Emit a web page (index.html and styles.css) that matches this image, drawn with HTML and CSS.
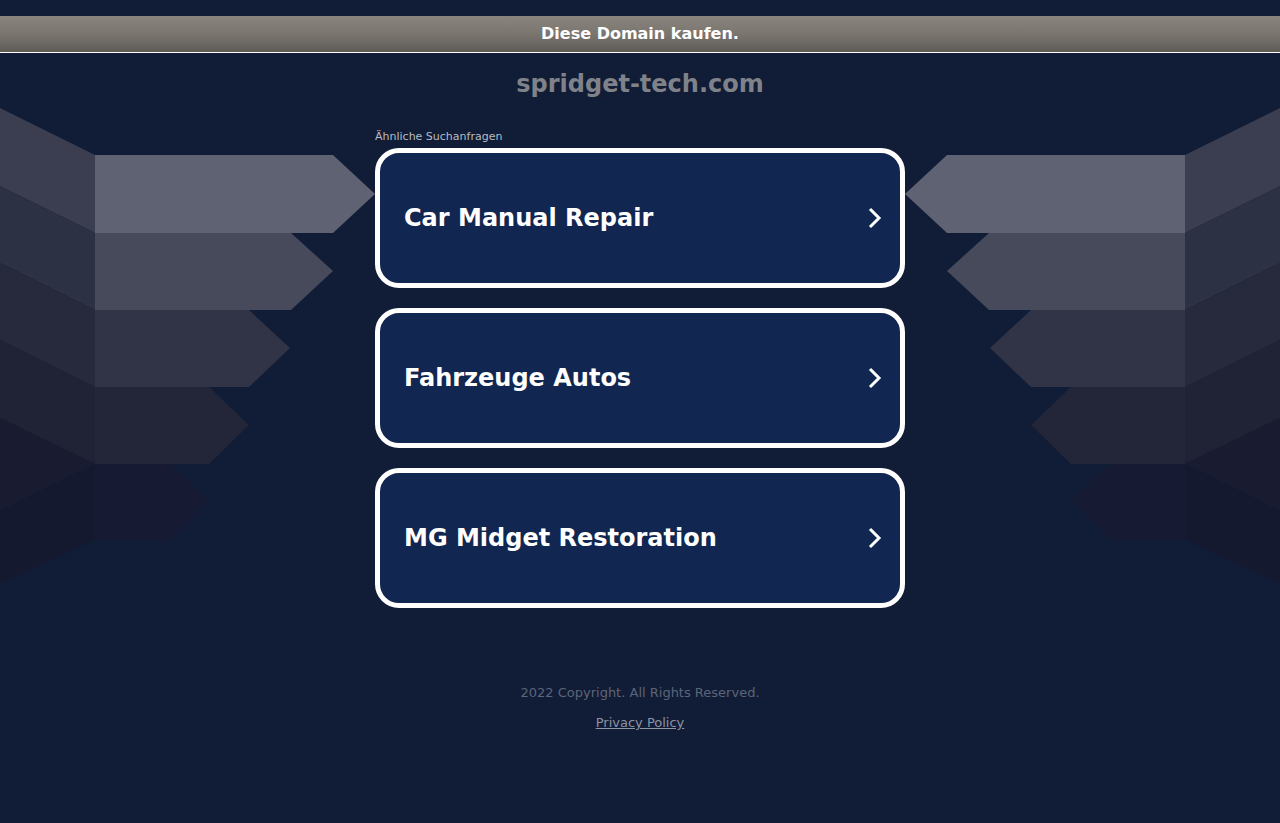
FILE: index.html
```html
<!DOCTYPE html>
<html lang="de">

<head>
    <meta charset="UTF-8">
    <title>spridget-tech.com</title>
    <link rel="stylesheet" href="styles.css">
</head>

<body>
    <div class="page">
        <!-- background arrows, left side; the right one is the same drawing mirrored -->
        <svg class="deco deco-left" width="375" height="600" viewBox="0 0 375 600">
            <polygon points="0,108 95,155 95,233 0,186" fill="#3a3e50" />
            <polygon points="0,186 95,233 95,310 0,263" fill="#2d3144" />
            <polygon points="0,263 95,310 95,387 0,340" fill="#262a3c" />
            <polygon points="0,340 95,387 95,464 0,418" fill="#1f2335" />
            <polygon points="0,418 95,464 0,511" fill="#191c30" />
            <polygon points="0,511 95,464 95,540 0,584" fill="#15192f" />
            <polygon points="95,155 333,155 375,194 333,233 95,233" fill="#5f6272" />
            <polygon points="95,233 291,233 333,271 291,310 95,310" fill="#464a5b" />
            <polygon points="95,310 249,310 290,348 249,387 95,387" fill="#303446" />
            <polygon points="95,387 209,387 249,425 209,464 95,464" fill="#222638" />
            <polygon points="95,464 170,464 208,501 170,540 95,540" fill="#161a32" />
        </svg>
        <svg class="deco deco-right" width="375" height="600" viewBox="0 0 375 600">
            <polygon points="0,108 95,155 95,233 0,186" fill="#3a3e50" />
            <polygon points="0,186 95,233 95,310 0,263" fill="#2d3144" />
            <polygon points="0,263 95,310 95,387 0,340" fill="#262a3c" />
            <polygon points="0,340 95,387 95,464 0,418" fill="#1f2335" />
            <polygon points="0,418 95,464 0,511" fill="#191c30" />
            <polygon points="0,511 95,464 95,540 0,584" fill="#15192f" />
            <polygon points="95,155 333,155 375,194 333,233 95,233" fill="#5f6272" />
            <polygon points="95,233 291,233 333,271 291,310 95,310" fill="#464a5b" />
            <polygon points="95,310 249,310 290,348 249,387 95,387" fill="#303446" />
            <polygon points="95,387 209,387 249,425 209,464 95,464" fill="#222638" />
            <polygon points="95,464 170,464 208,501 170,540 95,540" fill="#161a32" />
        </svg>

        <div class="buybar">
            <a href="#">Diese Domain kaufen.</a>
        </div>

        <h1 class="domain">spridget-tech.com</h1>

        <div class="results">
            <p class="results-title">Ähnliche Suchanfragen</p>
            <ul class="link-list">
                <li>
                    <a class="link-card" href="#">
                        <span>Car Manual Repair</span>
                        <svg class="chevron" width="14" height="22" viewBox="0 0 14 22">
                            <polyline points="2,2 11,11 2,20" />
                        </svg>
                    </a>
                </li>
                <li>
                    <a class="link-card" href="#">
                        <span>Fahrzeuge Autos</span>
                        <svg class="chevron" width="14" height="22" viewBox="0 0 14 22">
                            <polyline points="2,2 11,11 2,20" />
                        </svg>
                    </a>
                </li>
                <li>
                    <a class="link-card" href="#">
                        <span>MG Midget Restoration</span>
                        <svg class="chevron" width="14" height="22" viewBox="0 0 14 22">
                            <polyline points="2,2 11,11 2,20" />
                        </svg>
                    </a>
                </li>
            </ul>
        </div>

        <div class="footer">
            <p class="copyright">2022 Copyright. All Rights Reserved.</p>
            <a class="privacy" href="#">Privacy Policy</a>
        </div>
    </div>
</body>

</html>
```

FILE: styles.css
```css
* {
    box-sizing: border-box;
}

body {
    margin: 0;
    background-color: #111c36;
    font-family: "DejaVu Sans", Verdana, sans-serif;
}

.page {
    position: relative;
    min-height: 823px;
    padding-top: 16px;
    overflow: hidden;
}

.deco {
    position: absolute;
    top: 0;
    z-index: 0;
}

.deco-left {
    left: 0;
}

.deco-right {
    right: 0;
    transform: scaleX(-1);
}

.buybar {
    position: relative;
    z-index: 1;
    display: flex;
    justify-content: center;
    align-items: center;
    height: 37px;
    padding-bottom: 2px;
    border-bottom: 1px solid #fff;
    background-image: linear-gradient(180deg, #89847e 0%, #7a756f 50%, #5e5b57 100%);
}

.buybar a {
    color: #fff;
    font-size: 16px;
    font-weight: bold;
    text-decoration: none;
}

.domain {
    position: relative;
    z-index: 1;
    margin: 16px 0 0;
    font-size: 24px;
    line-height: 30px;
    color: #7f8289;
    text-align: center;
}

.results {
    position: relative;
    z-index: 1;
    width: 530px;
    margin: 31px auto 0;
}

.results-title {
    margin: 0 0 5px;
    font-size: 11px;
    line-height: 13px;
    color: #b8bbc2;
}

.link-list {
    display: flex;
    flex-direction: column;
    gap: 20px;
    margin: 0;
    padding: 0;
}

li {
    list-style: none;
}

.link-card {
    display: flex;
    justify-content: space-between;
    align-items: center;
    height: 140px;
    padding: 0 18px 0 24px;
    border: 5px solid #fff;
    border-radius: 24px;
    background-color: #112650;
    color: #fff;
    font-size: 24px;
    font-weight: bold;
    text-decoration: none;
}

.chevron polyline {
    fill: none;
    stroke: #fff;
    stroke-width: 3;
}

.footer {
    position: relative;
    z-index: 1;
    display: flex;
    flex-direction: column;
    align-items: center;
    margin-top: 77px;
}

.copyright {
    margin: 0 0 14px;
    font-size: 13px;
    line-height: 16px;
    color: #5c6579;
}

.privacy {
    font-size: 13px;
    line-height: 16px;
    color: #8b93a4;
}
```
